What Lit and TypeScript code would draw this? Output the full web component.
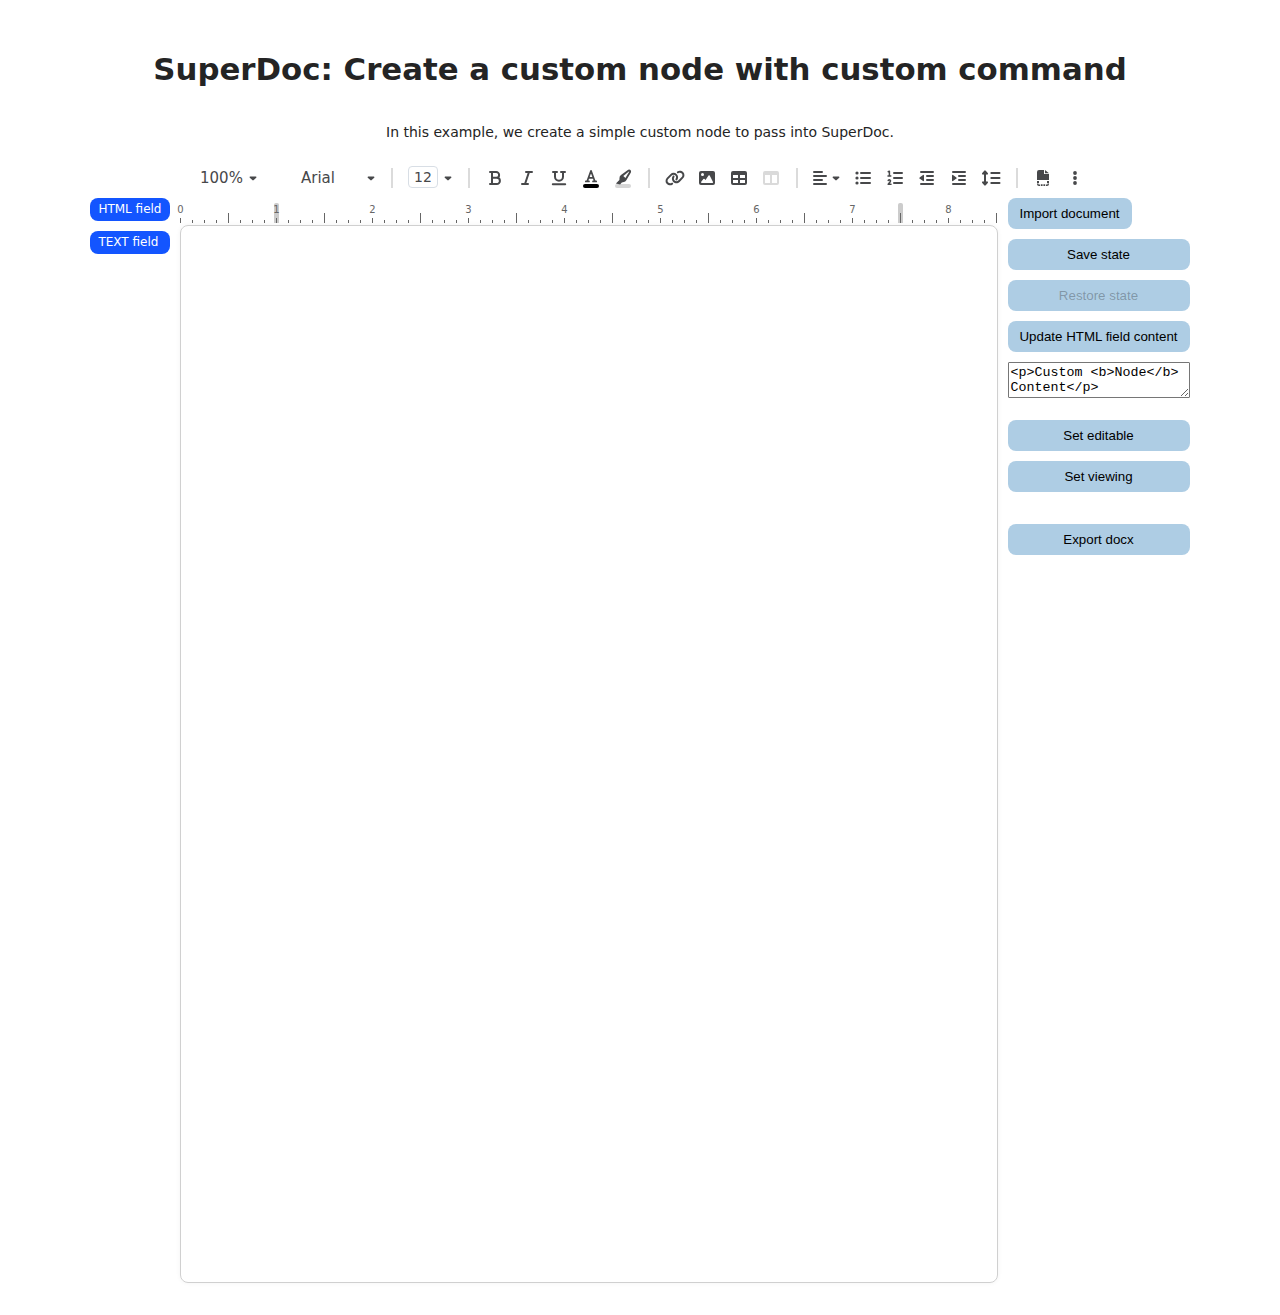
import { LitElement, html, css, svg, nothing } from "lit";
import { customElement } from "lit/decorators.js";

const line = (d: string, w = 2) =>
  svg`<path d=${d} fill="none" stroke="currentColor" stroke-width=${w} stroke-linecap="round" stroke-linejoin="round"/>`;

const ICONS: Record<string, unknown> = {
  bold: svg`${line("M3 2H9.2A2.9 2.9 0 0 1 9.2 7.8H5H9.8A3.1 3.1 0 0 1 9.8 14H3M5 2V14")}`,
  italic: svg`${line("M7 2H13M10 2L6 14M3 14H9")}`,
  underline: svg`${line("M2 2H6M10 2H14M4 2V6.7A4 4 0 0 0 12 6.7V2M1.8 14.2H14.2")}`,
  color: svg`${line("M2.8 12.4H6M10 12.4H13.2M4.2 12.2L8 1.9L11.8 12.2M5.7 8.8H10.3", 1.7)}`,
  highlight: svg`<path fill="currentColor" d="M13.2.8 6 6.1Q4.4 7.3 4.5 9.1L4.4 10.9 .9 14.4 5.1 15.5 6.8 13.6 8.8 13.1Q10.4 12.9 11.3 11.3L15.9 3.5Q16.5 2 15.5 1 14.5.1 13.2.8Z"/><path d="M8.3 7 10.4 9.1 14.2 2.8 13.9 2.5Z" fill="#fff"/>`,
  link: svg`<path fill="currentColor" transform="translate(-2 0) scale(.03125)" d="M579.8 267.7c56.5-56.5 56.5-148 0-204.5c-50-50-128.8-56.5-186.3-15.4l-1.6 1.1c-14.4 10.3-17.7 30.3-7.4 44.6s30.3 17.7 44.6 7.4l1.6-1.1c32.1-22.9 76-19.3 103.8 8.6c31.5 31.5 31.5 82.5 0 114L422.3 334.8c-31.5 31.5-82.5 31.5-114 0c-27.9-27.9-31.5-71.8-8.6-103.8l1.1-1.6c10.3-14.4 6.9-34.4-7.4-44.6s-34.4-6.9-44.6 7.4l-1.1 1.6C206.5 251.2 213 330 263 380c56.5 56.5 148 56.5 204.5 0L579.8 267.7zM60.2 244.3c-56.5 56.5-56.5 148 0 204.5c50 50 128.8 56.5 186.3 15.4l1.6-1.1c14.4-10.3 17.7-30.3 7.4-44.6s-30.3-17.7-44.6-7.4l-1.6 1.1c-32.1 22.9-76 19.3-103.8-8.6C74 372 74 321 105.5 289.5L217.7 177.2c31.5-31.5 82.5-31.5 114 0c27.9 27.9 31.5 71.8 8.6 103.9l-1.1 1.6c-10.3 14.4-6.9 34.4 7.4 44.6s34.4 6.9 44.6-7.4l1.1-1.6C433.5 260.8 427 182 377 132c-56.5-56.5-148-56.5-204.5 0L60.2 244.3z"/>`,
  image: svg`<rect y="1" width="16" height="14" rx="2" fill="currentColor"/><circle cx="3.5" cy="4.5" r="1.5" fill="#fff"/><path fill="#fff" d="M2.6 13Q1.7 12.8 2.2 11.8L4.4 9Q5 8.4 5.6 9L6.5 10 9.5 5.6Q10.1 5 10.7 5.6L14 11.9Q14.3 12.9 13.3 13Z"/>`,
  table: svg`<path fill="currentColor" fill-rule="evenodd" d="M2 1H14A2 2 0 0 1 16 3V13A2 2 0 0 1 14 15H2A2 2 0 0 1 0 13V3A2 2 0 0 1 2 1ZM2 5V8H7V5ZM9 5V8H14V5ZM2 10V13H7V10ZM9 10V13H14V10Z"/>`,
  columns: svg`<path fill="currentColor" fill-rule="evenodd" d="M2 1H14A2 2 0 0 1 16 3V13A2 2 0 0 1 14 15H2A2 2 0 0 1 0 13V3A2 2 0 0 1 2 1ZM2 5V13H7V5ZM9 5V13H14V5Z"/>`,
  align: svg`${line("M2 2H10M2 6H14M2 10H10M2 14H14")}`,
  bullets: svg`<g fill="currentColor"><circle cx="2" cy="3" r="1.6"/><circle cx="2" cy="8" r="1.6"/><circle cx="2" cy="13" r="1.6"/></g>${line("M6 3H15M6 8H15M6 13H15")}`,
  numbers: svg`${line("M1.2 1.8L2.4 1.3V6M1 6H3.8", 1.5)}${line("M1.2 10.5C2.2 9.3 4 10 3.4 11.5L1.2 14.3H4", 1.5)}${line("M7 3H15M7 8H15M7 13H15")}`,
  outdent: svg`${line("M2 2H14M8 6H14M8 10H14M2 14H14")}<path fill="currentColor" d="M.6 7.6 4 4.9Q5 4.5 5 5.5V10.5Q5 11.5 4 11.1L.6 8.4Q.2 8 .6 7.6Z"/>`,
  indent: svg`${line("M2 2H14M8 6H14M8 10H14M2 14H14")}<path fill="currentColor" d="M5.4 7.6 2 4.9Q1 4.5 1 5.5V10.5Q1 11.5 2 11.1L5.4 8.4Q5.8 8 5.4 7.6Z"/>`,
  spacing: svg`${line("M2 2.2V13.8M0 3.6L2 1.4L4 3.6M0 12.4L2 14.6L4 12.4")}<path fill="currentColor" d="M2 1 4.6 4.2H-.6ZM2 15 4.6 11.8H-.6Z"/>${line("M8.3 3H16.5M8.3 8H16.5M8.3 13H16.5")}`,
  page: svg`<path fill="currentColor" d="M4 0H9V4H14V10H2V2A2 2 0 0 1 4 0ZM10 0 14 3.2H10Z"/><path fill="currentColor" d="M2 11H4V13H2ZM12 11H14V13H12ZM2 13.5H3.5V14.5H5V16H4A2 2 0 0 1 2 14ZM14 13.5H12.5V14.5H11V16H12A2 2 0 0 0 14 14ZM5.8 14.3H7.6V16H5.8ZM8.4 14.3H10.2V16H8.4Z"/>`,
  more: svg`<g fill="currentColor"><circle cx="8" cy="3" r="1.9"/><circle cx="8" cy="8" r="1.9"/><circle cx="8" cy="13" r="1.9"/></g>`,
};

const icon = (name: string, cls = "") =>
  html`<span class="tool ${cls}"><svg viewBox="0 0 16 16" width="16" height="16">${ICONS[name]}</svg></span>`;
const caret = html`<svg class="caret" viewBox="0 0 8 5" width="8" height="5"><path fill="currentColor" d="M1.2.5H6.8Q7.9.8 7.2 1.7L4.7 4.1Q4 4.7 3.3 4.1L.8 1.7Q.1.8 1.2.5Z"/></svg>`;

@customElement("app-root")
export class AppRoot extends LitElement {
  static styles = css`
    :host { display: block; height: 1315px; background: #fff; color: #242424; font-family: "DejaVu Sans", sans-serif; overflow: hidden; }
    h1 { margin: 48px 0 0; font-size: 30.8px; line-height: 42px; text-align: center; white-space: nowrap; }
    .intro { margin: 32px 0 0; font-size: 14px; line-height: 20px; text-align: center; }
    .toolbar { display: flex; align-items: center; height: 32px; margin: 20px 0 0 200px; color: #47484a; font-size: 15px; line-height: 18px; }
    .caret { display: block; flex: none; margin-top: 1px; }
    .zoom { width: 49px; }
    .family { width: 66px; margin-left: 44px; }
    .size { box-sizing: border-box; width: 30px; height: 22px; margin: -2px 6px 0 0; border: 1px solid #d8dee5; border-radius: 4px; font-size: 14px; line-height: 20px; text-align: center; }
    .sep { width: 2px; height: 20px; margin: 0 9px; background: #dbdbdb; }
    .sep.wide { margin: 0 15px 0 16px; }
    .sep.middle { margin-left: 16px; }
    .sep.short { margin-right: 6px; }
    .tool { position: relative; display: flex; justify-content: center; align-items: center; width: 32px; height: 32px; flex: none; }
    .tool svg { display: block; overflow: visible; }
    .raised svg { margin-top: -3px; }
    .tool.raised::after { content: ""; position: absolute; left: 8px; top: 22px; width: 16px; height: 4px; border-radius: 2px; background: #000; }
    .tool.mark::after { z-index: -1; background: #d6d6d6; }
    .tool.mark { z-index: 0; }
    .off { color: #dadada; }
    .group { display: flex; }
    .drop { margin: 0 7px 0 -4px; }
    .main { display: flex; align-items: flex-start; margin: 4px 90px 0; }
    .fields { display: flex; flex-direction: column; gap: 10px; width: 80px; margin-right: 10px; }
    .field { box-sizing: border-box; height: 23px; padding: 0 8px 0 8.4px; border-radius: 8px; background: #1355ff; color: #fff; font-size: 12px; line-height: 22px; white-space: nowrap; }
    .doc { width: 818px; margin-right: 10px; }
    .ruler { position: relative; display: flex; align-items: flex-end; height: 20px; margin-top: 5px; }
    .tick { position: relative; flex: none; width: 12px; height: 3px; }
    .tick::before { content: ""; position: absolute; left: 0; bottom: 0; width: 1px; height: 100%; background: #666; }
    .tick.half { height: 10px; }
    .tick.inch { height: 5px; }
    .num { position: absolute; left: -9.5px; bottom: 6px; width: 20px; color: #666; font-size: 10px; line-height: 14px; text-align: center; }
    .handle { position: absolute; top: 0; width: 5px; height: 20px; border-radius: 2px 2px 0 0; background: #ccc; }
    .start { left: 94px; }
    .end { left: 718px; }
    .page { box-sizing: border-box; height: 1058px; margin-top: 2px; border: 1px solid #d0d0d0; border-radius: 8px; box-shadow: 0 0 5px rgba(0, 0, 0, 0.05); }
    .side { display: flex; flex-direction: column; width: 182px; }
    button { height: 31px; margin: 0 0 10px; padding: 0 1px 0 0; border: 0; border-radius: 8px; background: #aecde4; color: #000; font: 13.333px "Liberation Sans", sans-serif; }
    button:disabled { color: rgba(16, 16, 16, 0.3); }
    .import { width: 124px; }
    textarea { box-sizing: border-box; width: 182px; height: 36px; margin: 0 0 22px; padding: 2px 2px 2px 1.5px; border: 1px solid #767676; border-radius: 1px; font: 13.333px "Liberation Mono", monospace; color: #000; }
    .gap { margin-bottom: 32px; }
  `;

  render() {
    const ticks = Array.from({ length: 69 }, (_, i) => i);
    return html`
      <h1>SuperDoc: Create a custom node with custom command</h1>
      <p class="intro">In this example, we create a simple custom node to pass into SuperDoc.</p>
      <div class="toolbar">
        <span class="zoom">100%</span>${caret}
        <span class="family">Arial</span>${caret}
        <span class="sep wide"></span><span class="size">12</span>${caret}
        <span class="sep middle"></span>
        <span class="group">${icon("bold")}${icon("italic")}${icon("underline")}${icon("color", "raised")}${icon("highlight", "raised mark")}</span>
        <span class="sep"></span>
        <span class="group">${icon("link")}${icon("image")}${icon("table")}${icon("columns", "off")}</span>
        <span class="sep short"></span>
        ${icon("align")}<span class="drop">${caret}</span>
        <span class="group">${icon("bullets")}${icon("numbers")}${icon("outdent")}${icon("indent")}${icon("spacing")}</span>
        <span class="sep"></span>
        ${icon("page")}${icon("more")}
      </div>
      <div class="main">
        <div class="fields"><div class="field">HTML field</div><div class="field">TEXT field</div></div>
        <div class="doc">
          <div class="ruler">
            <i class="handle start"></i><i class="handle end"></i>
            ${ticks.map((i) => html`<span class="tick ${i % 8 === 0 ? "inch" : i % 4 === 0 ? "half" : ""}">${i % 8 === 0 ? html`<span class="num">${i / 8}</span>` : nothing}</span>`)}
          </div>
          <div class="page"></div>
        </div>
        <div class="side">
          <button class="import">Import document</button>
          <button>Save state</button>
          <button disabled>Restore state</button>
          <button>Update HTML field content</button>
          <textarea .value=${"<p>Custom <b>Node</b> Content</p>"}></textarea>
          <button>Set editable</button>
          <button class="gap">Set viewing</button>
          <button>Export docx</button>
        </div>
      </div>
    `;
  }
}
